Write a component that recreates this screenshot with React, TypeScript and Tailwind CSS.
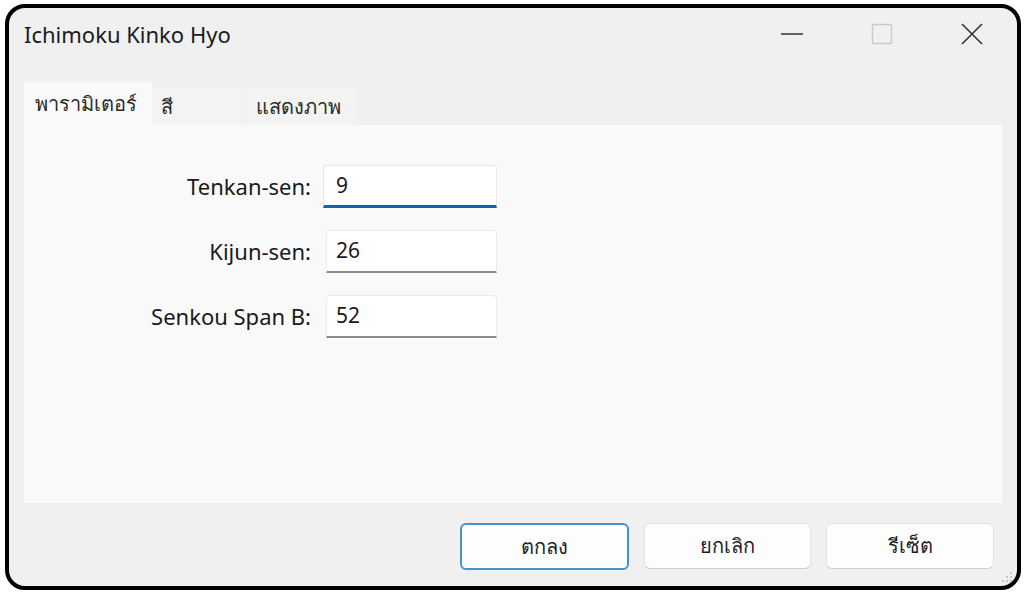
import React from "react";

const font = { fontFamily: '"Noto Sans", "Open Sans", "Liberation Sans", sans-serif' };

function Field({ label, value, focused }: { label: string; value: string; focused?: boolean }) {
  return (
    <div className="flex items-center h-[43px]">
      <div className="w-[287px] text-right text-[22px] text-[#1a1a1a]">{label}</div>
      <div
        className={
          focused
            ? "ml-[12px] w-[174px] h-[43px] bg-white rounded-t-[4px] border border-[#e6e6e6] border-b-[3px] border-b-[#0067c0] flex items-center pl-[12px] text-[21px] text-[#1a1a1a]"
            : "ml-[15px] w-[171px] h-[43px] bg-white rounded-t-[4px] border border-[#ebebeb] border-b-[2px] border-b-[#8c8c8c] flex items-center pl-[9px] text-[21px] text-[#1a1a1a]"
        }
      >
        {value}
      </div>
    </div>
  );
}

export default function App() {
  return (
    <div className="w-[1024px] h-[594px] bg-white pl-[5px] pt-[4px]" style={font}>
      <div className="w-[1016px] h-[586px] border-4 border-black rounded-[20px] bg-[#f0f0f0] flex flex-col overflow-hidden">
        {/* Title bar */}
        <div className="h-[52px] flex items-center shrink-0">
          <div className="pl-[15px] text-[22px] text-[#1b1b1b]">Ichimoku Kinko Hyo</div>
          <div className="ml-auto flex h-full">
            <div className="w-[90px] h-full flex items-center justify-center">
              <svg width="22" height="22" viewBox="0 0 22 22">
                <line x1="0" y1="11" x2="22" y2="11" stroke="#333" strokeWidth="1.6" />
              </svg>
            </div>
            <div className="w-[90px] h-full flex items-center justify-center">
              <svg width="22" height="22" viewBox="0 0 22 22">
                <rect x="1.5" y="1.5" width="19" height="19" fill="none" stroke="#c9c9c9" strokeWidth="1.4" rx="1" />
              </svg>
            </div>
            <div className="w-[90px] h-full flex items-center justify-center">
              <svg width="22" height="22" viewBox="0 0 22 22">
                <path d="M1 1 L21 21 M21 1 L1 21" stroke="#333" strokeWidth="1.6" />
              </svg>
            </div>
          </div>
        </div>

        {/* Tabs */}
        <div className="mt-[22px] pl-[15px] flex items-end h-[43px] shrink-0">
          <div className="w-[128px] h-[43px] bg-[#f9f9f9] flex items-center pl-[11px] text-[20px] text-[#2b2b2b]">
            พารามิเตอร์
          </div>
          <div className="w-[89px] h-[37px] bg-[#f3f3f3] flex items-center pl-[9px] text-[20px] text-[#2b2b2b]">
            สี
          </div>
          <div className="ml-[2px] w-[112px] h-[37px] bg-[#f3f3f3] flex items-center pl-[13px] text-[20px] text-[#2b2b2b]">
            แสดงภาพ
          </div>
        </div>

        {/* Panel */}
        <div className="mx-[15px] h-[378px] shrink-0 bg-[#f9f9f9] border-r border-b border-[#fdfdfd] pt-[40px] flex flex-col gap-[22px]">
          <Field label="Tenkan-sen:" value="9" focused />
          <Field label="Kijun-sen:" value="26" />
          <Field label="Senkou Span B:" value="52" />
        </div>

        {/* Buttons */}
        <div className="relative flex-1 flex justify-end items-start pt-[20px] pr-[23px] gap-[15px]">
          <button className="w-[169px] h-[47px] rounded-[6px] bg-[#fdfdfd] border-2 border-[#4a8fd0] text-[20px] text-[#1f1f1f] flex items-center justify-center">
            ตกลง
          </button>
          <button className="w-[167px] h-[46px] rounded-[6px] bg-[#fdfdfd] border border-[#e2e2e2] border-b-[#cfcfcf] text-[20px] text-[#1f1f1f] flex items-center justify-center">
            ยกเลิก
          </button>
          <button className="w-[168px] h-[46px] rounded-[6px] bg-[#fdfdfd] border border-[#e2e2e2] border-b-[#cfcfcf] text-[20px] text-[#1f1f1f] flex items-center justify-center">
            รีเซ็ต
          </button>
          <svg className="absolute right-[4px] bottom-[3px]" width="12" height="12" viewBox="0 0 12 12">
            <rect x="9" y="1" width="2" height="2" fill="#c8c8c8" />
            <rect x="5" y="5" width="2" height="2" fill="#c8c8c8" />
            <rect x="9" y="5" width="2" height="2" fill="#c8c8c8" />
            <rect x="1" y="9" width="2" height="2" fill="#c8c8c8" />
            <rect x="5" y="9" width="2" height="2" fill="#c8c8c8" />
            <rect x="9" y="9" width="2" height="2" fill="#c8c8c8" />
          </svg>
        </div>
      </div>
    </div>
  );
}
